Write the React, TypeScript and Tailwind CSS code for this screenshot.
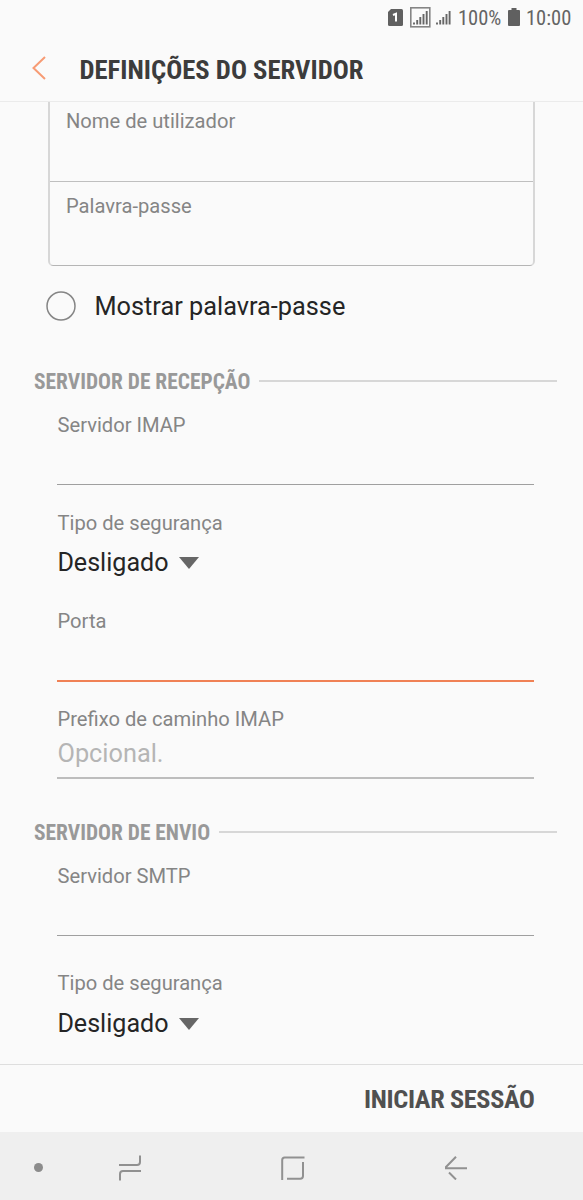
import React from 'react';

function StatusBar() {
  return (
    <div className="flex h-9 shrink-0 items-center justify-end pr-[11px] text-[#646464]">
      <svg className="mr-[7px] mb-[2px] h-[17px] w-[15px]" viewBox="0 0 15 17">
        <path d="M3 0H13.500Q15 0 15 1.500V15.500Q15 17 13.500 17H1.500Q0 17 0 15.500V3Z" fill="#606060" />
        <path d="M5 6L8 4.800V12.500" fill="none" stroke="#fff" strokeWidth="2" />
      </svg>
      <svg className="mr-[5px] mb-[2px] h-[21px] w-[21px]" viewBox="0 0 21 21">
        <rect x="0.8" y="0.8" width="19" height="19" fill="none" stroke="#858585" strokeWidth="1.600" />
        <path d="M4 15.500V17.500M7.200 13V17.500M10.300 10V17.500M13.500 7V17.500M16.700 4V17.500" stroke="#666" strokeWidth="1.900" />
      </svg>
      <svg className="mr-[7px] mb-[1px] h-[15px] w-[15px]" viewBox="0 0 15 15">
        <path d="M1 12.500V14.500M4.200 10V14.500M7.300 7V14.500M10.500 4V14.500M13.600 1V14.500" stroke="#666" strokeWidth="1.900" />
      </svg>
      <span className="w-[45px] whitespace-nowrap text-[20.500px] leading-9 [font-stretch:78%]">100%</span>
      <svg className="mr-[6px] mb-[2px] ml-[5px] h-[18px] w-[12px]" viewBox="0 0 12 18">
        <path d="M3.500 0H8.500V2H11Q12 2 12 3V17Q12 18 11 18H1Q0 18 0 17V3Q0 2 1 2H3.500Z" fill="#606060" />
      </svg>
      <span className="w-[46px] whitespace-nowrap text-[20.500px] leading-9 [font-stretch:80%]">10:00</span>
    </div>
  );
}

function Section({ title }: { title: string }) {
  return (
    <div className="flex h-8 items-center gap-[9px] pr-[26px] pl-[34px]">
      <h2 className="whitespace-nowrap pt-[2px] text-[21.450px] leading-8 font-bold text-[#999] [font-stretch:75%]">{title}</h2>
      <div className="mb-[1px] h-[2px] flex-1 bg-[#d7d7d7]" />
    </div>
  );
}

const Label = ({ children }: { children: string }) => (
  <div className="pl-[0.500px] text-[20.150px] leading-7 text-[#858585]">{children}</div>
);

function Select({ value }: { value: string }) {
  return (
    <div className="flex h-8 items-center">
      <span className="pt-[2px] pl-[0.400px] text-[25.100px] leading-8 text-[#252525]">{value}</span>
      <svg className="ml-[10.500px] mt-[1px] h-[12px] w-[20px]" viewBox="0 0 20 12">
        <path d="M0 0H20L10 12Z" fill="#666" />
      </svg>
    </div>
  );
}

export default function App() {
  return (
    <div className="flex h-[1200px] w-[583px] flex-col overflow-hidden bg-[#fafafa] font-['Roboto',sans-serif]">
      <StatusBar />
      <header className="flex h-[66px] shrink-0 items-center border-b border-[#ebebeb] pl-8">
        <svg className="mb-[1px] mr-[33.500px] h-[24px] w-[14px]" viewBox="0 0 14 24">
          <path d="M13 1L1.500 12L13 23" fill="none" stroke="#f79b74" strokeWidth="2" />
        </svg>
        <h1 className="pt-[2px] text-[26.650px] leading-8 font-bold text-[#3c3c3c] [font-stretch:75%]">DEFINIÇÕES DO SERVIDOR</h1>
      </header>

      <main className="flex h-[962px] shrink-0 flex-col">
        <div className="mr-[48px] ml-[48px] h-[164px] rounded-b-[5px] border-x-2 border-b border-x-[#d7d7d7] border-b-[#b5b5b5]">
          <div className="h-[80px] border-b border-[#bfbfbf] pt-[5px] pl-[15.500px]"><Label>Nome de utilizador</Label></div>
          <div className="pt-[10px] pl-[15.500px]"><Label>Palavra-passe</Label></div>
        </div>
        <div className="mt-[25px] flex h-[30px] items-center pl-[46px]">
          <svg className="h-[30px] w-[30px]" viewBox="0 0 30 30">
            <circle cx="15" cy="15" r="14" fill="none" stroke="#858585" strokeWidth="1.500" />
          </svg>
          <span className="ml-[18.500px] pt-[2px] text-[25.300px] leading-8 text-[#252525]">Mostrar palavra-passe</span>
        </div>
        <div className="mt-[44px]"><Section title="SERVIDOR DE RECEPÇÃO" /></div>
        <div className="mr-[49px] ml-[57px] mt-[14px] h-[74px] border-b border-[#9f9f9f]"><Label>Servidor IMAP</Label></div>
        <div className="ml-[57px] mt-[24px] h-[98px]">
          <Label>Tipo de segurança</Label>
          <div className="mt-[9px]"><Select value="Desligado" /></div>
        </div>
        <div className="mr-[49px] ml-[57px] h-[75px] border-b-2 border-[#f08155]"><Label>Porta</Label></div>
        <div className="mr-[49px] ml-[57px] mt-[23px] h-[74px] border-b-2 border-[#bdbdbd]">
          <Label>Prefixo de caminho IMAP</Label>
          <div className="mt-[5px] pl-[0.500px] text-[25.300px] leading-8 text-[#b5b5b5]">Opcional.</div>
        </div>
        <div className="mt-[37px]"><Section title="SERVIDOR DE ENVIO" /></div>
        <div className="mr-[49px] ml-[57px] mt-[14px] h-[74px] border-b border-[#9f9f9f]"><Label>Servidor SMTP</Label></div>
        <div className="ml-[57px] mt-[33px]">
          <Label>Tipo de segurança</Label>
          <div className="mt-[10px]"><Select value="Desligado" /></div>
        </div>
      </main>

      <footer className="flex h-[68px] shrink-0 items-center justify-end border-t border-[#dedede] pr-[48.500px]">
        <button className="text-[26.300px] leading-8 font-bold tracking-[-0.380px] text-[#505050] [font-stretch:75%]">INICIAR SESSÃO</button>
      </footer>
      <nav className="flex h-[68px] shrink-0 items-center bg-[#efefef] pt-[3px] pl-[34px]">
        <div className="h-[9px] w-[9px] rounded-full bg-[#8c8c8c]" />
        <svg className="ml-[76px] h-[26px] w-[22px]" viewBox="0 0 22 26" fill="none" stroke="#919191" strokeWidth="2">
          <path d="M21 0.500V7Q21 10 18 10H0M22 16H4Q1 16 1 19V25.500" />
        </svg>
        <svg className="ml-[140px] h-[24px] w-[24px]" viewBox="0 0 24 24" fill="none" stroke="#919191" strokeWidth="2">
          <path d="M1.200 24V4Q1.200 1.500 3.700 1.500H23.500M22 6V20Q22 22.700 19.300 22.700H6" />
        </svg>
        <svg className="ml-[140px] h-[24px] w-[22px]" viewBox="0 0 22 24" fill="none" stroke="#919191" strokeWidth="2">
          <path d="M11 0.700L1 11V12.300H22M4 16.500L11 23.500" />
        </svg>
      </nav>
    </div>
  );
}
